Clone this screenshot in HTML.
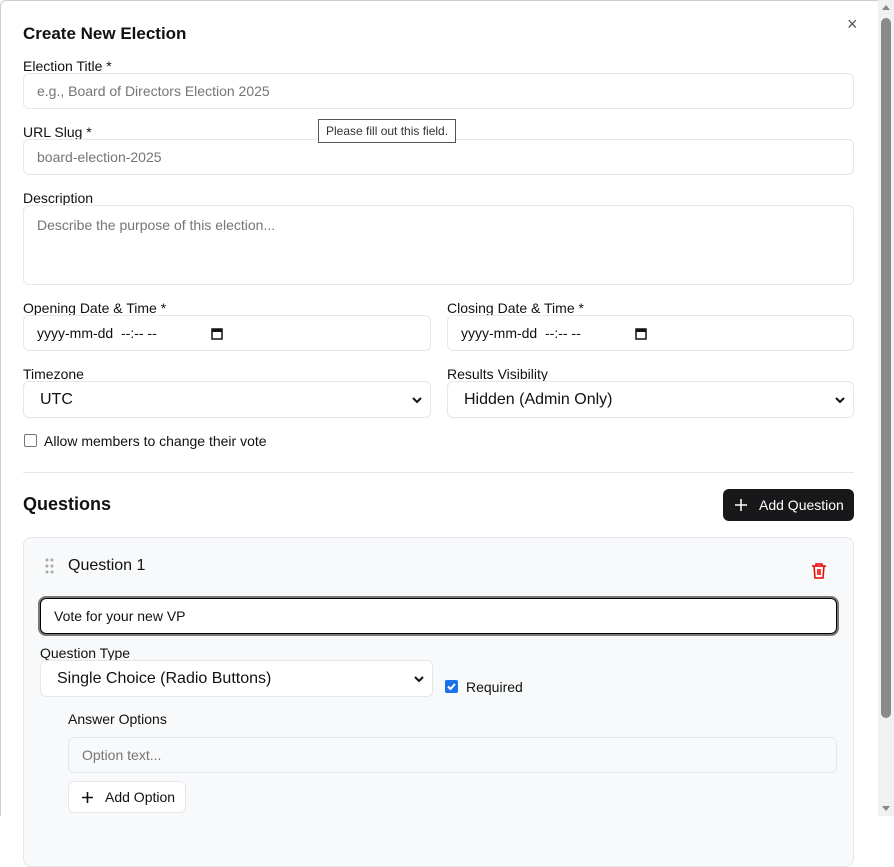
<!DOCTYPE html>
<html><head><style>
*{box-sizing:border-box;margin:0;padding:0}
body{width:894px;height:816px;overflow:hidden;background:#fff;font-family:"Liberation Sans",Arial,sans-serif;color:#111;position:relative}
.a{position:absolute}
.lbl{position:absolute;font-size:14px;color:#111}
.inp{position:absolute;border:1px solid #e5e7eb;border-radius:6px;background:#fff;font-size:14px;color:#757575;padding-left:13px;display:flex;align-items:center}
.sel{position:absolute;border:1px solid #e5e7eb;border-radius:6px;background:#fff;font-size:16px;color:#111;padding-left:16px;display:flex;align-items:center}
.chev{position:absolute;right:8px;top:50%;margin-top:-4px}
</style></head><body>
<div class="a" style="left:0;top:0;width:878px;height:816px;border-top:1px solid #ccc;border-left:1px solid #ccc;border-radius:6px 0 0 0"></div>
<div class="a" style="left:878px;top:0;width:16px;height:816px;background:#f1f1f1"></div>
<div class="a" style="left:881px;top:18px;width:10px;height:700px;background:#8a8a8a;border-radius:5px"></div>
<div class="a" style="left:882px;top:806px;width:0;height:0;border-left:4px solid transparent;border-right:4px solid transparent;border-top:5px solid #888"></div>
<div class="a" style="left:882px;top:5px;width:0;height:0;border-left:4px solid transparent;border-right:4px solid transparent;border-bottom:5px solid #888"></div>

<div class="a" style="left:847px;top:14px;font-size:18px;color:#555">×</div>
<div class="a" style="left:23px;top:24px;font-size:17px;font-weight:bold">Create New Election</div>

<div class="lbl" style="left:23px;top:58px">Election Title *</div>
<div class="inp" style="left:23px;top:73px;width:831px;height:36px">e.g., Board of Directors Election 2025</div>

<div class="lbl" style="left:23px;top:124px">URL Slug *</div>
<div class="inp" style="left:23px;top:139px;width:831px;height:36px">board-election-2025</div>

<div class="a" style="left:318px;top:119px;width:138px;height:24px;border:1px solid #555;background:#fff;font-size:12px;color:#333;padding:4px 0 0 7px">Please fill out this field.</div>

<div class="lbl" style="left:23px;top:190px">Description</div>
<div class="inp" style="left:23px;top:205px;width:831px;height:80px;align-items:flex-start;padding-top:11px">Describe the purpose of this election...</div>

<div class="lbl" style="left:23px;top:300px">Opening Date &amp; Time *</div>
<div class="inp" style="left:23px;top:315px;width:408px;height:36px;color:#111;white-space:pre">yyyy-mm-dd  --:-- --<svg class="a" style="left:187px;top:11px" width="12" height="13" viewBox="0 0 12 13"><rect x="1" y="2" width="10" height="10" fill="none" stroke="#111" stroke-width="1.5"/><rect x="1" y="2" width="10" height="3" fill="#111"/></svg></div>
<div class="lbl" style="left:447px;top:300px">Closing Date &amp; Time *</div>
<div class="inp" style="left:447px;top:315px;width:407px;height:36px;color:#111;white-space:pre">yyyy-mm-dd  --:-- --<svg class="a" style="left:187px;top:11px" width="12" height="13" viewBox="0 0 12 13"><rect x="1" y="2" width="10" height="10" fill="none" stroke="#111" stroke-width="1.5"/><rect x="1" y="2" width="10" height="3" fill="#111"/></svg></div>

<div class="lbl" style="left:23px;top:366px">Timezone</div>
<div class="sel" style="left:23px;top:381px;width:408px;height:37px;padding-left:16px">UTC<svg class="chev" width="10" height="8" viewBox="0 0 10 8"><path d="M1 2l4 4 4-4" fill="none" stroke="#111" stroke-width="2"/></svg></div>
<div class="lbl" style="left:447px;top:366px">Results Visibility</div>
<div class="sel" style="left:447px;top:381px;width:407px;height:37px">Hidden (Admin Only)<svg class="chev" width="10" height="8" viewBox="0 0 10 8"><path d="M1 2l4 4 4-4" fill="none" stroke="#111" stroke-width="2"/></svg></div>

<div class="a" style="left:24px;top:434px;width:13px;height:13px;border:1px solid #767676;border-radius:2px;background:#fff"></div>
<div class="lbl" style="left:44px;top:433px">Allow members to change their vote</div>

<div class="a" style="left:23px;top:472px;width:831px;height:1px;background:#e5e7eb"></div>

<div class="a" style="left:23px;top:494px;font-size:18px;font-weight:bold">Questions</div>
<div class="a" style="left:723px;top:489px;width:131px;height:32px;background:#18181b;border-radius:6px;color:#fff;font-size:14px;display:flex;align-items:center;padding-left:12px"><svg width="12" height="12" viewBox="0 0 12 12" style="margin-right:12px"><path d="M6 0v12M0 6h12" stroke="#fff" stroke-width="1.5"/></svg>Add Question</div>

<div class="a" style="left:23px;top:537px;width:831px;height:330px;background:#f8f9fa;border:1px solid #e5e7eb;border-radius:8px"></div>
<svg class="a" style="left:45px;top:558px" width="10" height="16" viewBox="0 0 10 16"><g fill="#aaa"><circle cx="2" cy="2" r="1.5"/><circle cx="7" cy="2" r="1.5"/><circle cx="2" cy="8" r="1.5"/><circle cx="7" cy="8" r="1.5"/><circle cx="2" cy="14" r="1.5"/><circle cx="7" cy="14" r="1.5"/></g></svg>
<div class="a" style="left:68px;top:557px;font-size:16px">Question 1</div>
<svg class="a" style="left:811px;top:562px" width="16" height="17" viewBox="0 0 16 17"><g fill="none" stroke="#e00" stroke-width="1.5"><path d="M1 4h14M5 4V2h6v2M3 4l1 12h8l1-12M7 7v6M9 7v6"/></g></svg>

<div class="a" style="left:38px;top:596px;width:801px;height:40px;border:2px solid #777;border-radius:8px"></div>
<div class="a" style="left:40px;top:598px;width:797px;height:36px;border:1.5px solid #000;border-radius:6px;background:#fff;font-size:14px;padding:9px 0 0 13px">Vote for your new VP</div>

<div class="lbl" style="left:40px;top:645px">Question Type</div>
<div class="sel" style="left:40px;top:660px;width:393px;height:37px">Single Choice (Radio Buttons)<svg class="chev" width="10" height="8" viewBox="0 0 10 8"><path d="M1 2l4 4 4-4" fill="none" stroke="#111" stroke-width="2"/></svg></div>
<div class="a" style="left:445px;top:680px;width:13px;height:13px;background:#1a73e8;border-radius:2px"><svg width="13" height="13" viewBox="0 0 13 13" style="display:block"><path d="M3 6.5l2.5 2.5 4.5-5" fill="none" stroke="#fff" stroke-width="2"/></svg></div>
<div class="lbl" style="left:466px;top:679px">Required</div>

<div class="lbl" style="left:68px;top:711px">Answer Options</div>
<div class="inp" style="left:68px;top:737px;width:769px;height:36px;background:#f8f9fa">Option text...</div>
<div class="a" style="left:68px;top:781px;width:118px;height:32px;background:#fff;border:1px solid #e5e7eb;border-radius:6px;font-size:14px;display:flex;align-items:center;padding-left:13px"><svg width="11" height="11" viewBox="0 0 11 11" style="margin-right:12px"><path d="M5.5 0v11M0 5.5h11" stroke="#111" stroke-width="1.6"/></svg>Add Option</div>
</body></html>
